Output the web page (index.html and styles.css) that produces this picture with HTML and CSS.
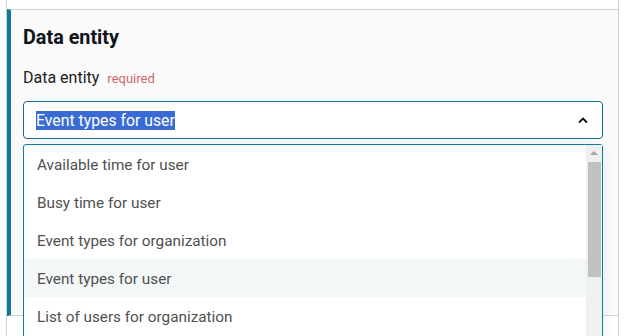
FILE: index.html
```html
<!DOCTYPE html>
<html>
<head>
<meta charset="utf-8">
<link rel="stylesheet" href="styles.css">
</head>
<body>
<div class="frame">
  <div class="above"></div>
  <section class="panel">
    <h2 class="title">Data entity</h2>
    <div class="label-row">
      <span class="label">Data entity</span>
      <span class="req">required</span>
    </div>
    <div class="select-wrap">
      <div class="select">
        <span class="sel-text">Event types for user</span>
        <svg class="chev" width="10" height="7" viewBox="0 0 10 7"><path d="M1 5.5 L5 1.5 L9 5.5" fill="none" stroke="#111" stroke-width="1.8"/></svg>
      </div>
      <div class="listbox">
        <ul class="options">
          <li class="opt">Available time for user</li>
          <li class="opt">Busy time for user</li>
          <li class="opt">Event types for organization</li>
          <li class="opt hover">Event types for user</li>
          <li class="opt">List of users for organization</li>
        </ul>
        <div class="scrollbar">
          <div class="arrow"></div>
          <div class="thumb"></div>
        </div>
      </div>
    </div>
  </section>
  <div class="below"></div>
</div>
</body>
</html>
```
FILE: styles.css
```css
html, body {
  margin: 0;
  padding: 0;
  overflow: hidden;
  height: 336px;
  background: #ffffff;
  font-family: Roboto, "Liberation Sans", sans-serif;
}
.frame {
  margin-left: 6px;
  width: 611px;
  border-left: 1px solid #cfd4d7;
  border-right: 1px solid #cfd4d7;
  height: 336px;
}
.above {
  height: 9px;
  background: #ffffff;
}
.panel {
  border-top: 1px solid #cfd4d7;
  border-bottom: 1px solid #cfd4d7;
  border-left: 4px solid #0e7896;
  background: #fafafa;
  height: 305px;
  padding: 0 15px 0 12px;
  position: relative;
  z-index: 1;
}
.title {
  margin: 0;
  padding-top: 16px;
  font-size: 19.8px;
  font-weight: 700;
  color: #111418;
  line-height: 24px;
}
.label-row {
  margin-top: 18px;
  display: flex;
  align-items: baseline;
  gap: 8px;
  line-height: 20px;
  height: 20px;
}
.label {
  font-size: 16px;
  color: #1c1c1c;
}
.req {
  font-size: 13px;
  color: #d0666b;
}
.select-wrap {
  position: relative;
  margin-top: 13px;
}
.select {
  height: 38px;
  box-sizing: border-box;
  border: 1px solid #10708f;
  border-radius: 4px;
  background: #ffffff;
  display: flex;
  align-items: center;
  justify-content: space-between;
  padding: 0 14px 0 12px;
}
.sel-text {
  font-size: 15.8px;
  line-height: 19px;
  color: #ffffff;
  background: #3a6bd5;
}
.chev {
  display: block;
}
.listbox {
  position: absolute;
  left: 0;
  right: 0;
  top: 43px;
  height: 260px;
  border: 1px solid #0f7ea3;
  border-radius: 3px 3px 0 0;
  background: #ffffff;
  display: flex;
  box-shadow: 2px 2px 8px rgba(0, 0, 0, 0.06);
}
.options {
  list-style: none;
  margin: 0;
  padding: 0;
  flex: 1;
}
.opt {
  height: 38px;
  box-sizing: border-box;
  padding-top: 2px;
  display: flex;
  align-items: center;
  padding-left: 13px;
  font-size: 15.3px;
  color: #505050;
}
.opt.hover {
  background: #f4f7f8;
}
.scrollbar {
  width: 16px;
  background: #f0f0f0;
  display: flex;
  flex-direction: column;
  align-items: center;
}
.arrow {
  margin-top: 6px;
  width: 0;
  height: 0;
  border-left: 4px solid transparent;
  border-right: 4px solid transparent;
  border-bottom: 4px solid #a3a3a3;
}
.thumb {
  margin-top: 7px;
  width: 13px;
  height: 115px;
  background: #c1c1c1;
}
.below {
  height: 20px;
  background: #ffffff;
}
```
